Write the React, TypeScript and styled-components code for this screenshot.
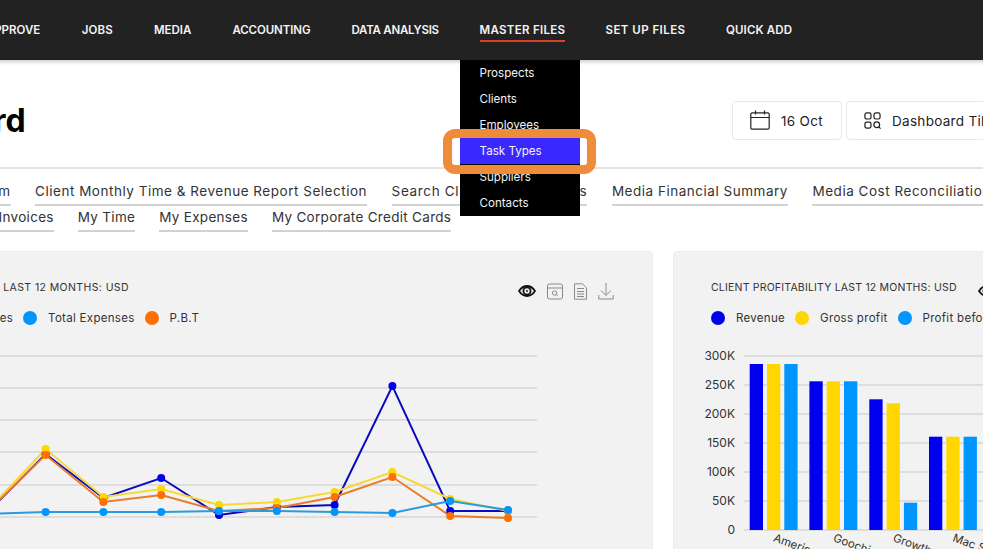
import React from "react";
import styled, { createGlobalStyle } from "styled-components";

const GlobalStyle = createGlobalStyle`
  html, body {
    margin: 0;
    background: #fff;
    font-family: "Inter", "Liberation Sans", sans-serif;
  }
`;

const Viewport = styled.div`
  position: relative;
  width: 983px;
  height: 549px;
  overflow: hidden;
`;

// the page is scrolled sideways in the reference, so the canvas starts left of the window
const Canvas = styled.div`
  position: relative;
  width: 1270px;
  margin-left: -157px;
`;

const NavBar = styled.nav`
  display: flex;
  align-items: center;
  gap: 40.8px;
  height: 60px;
  padding-left: 142px;
  background: #222222;
  box-shadow: 0 2px 4px rgba(0, 0, 0, 0.2);
`;

const NavItem = styled.a<{ $active?: boolean; $width: number; $spacing: number }>`
  display: flex;
  justify-content: center;
  width: ${(p) => p.$width}px;
  padding: 4px 0 3px;
  border-bottom: 2px solid ${(p) => (p.$active ? "#d8402a" : "transparent")};
  color: #f4f4f4;
  font-size: 11.5px;
  font-weight: 600;
  letter-spacing: ${(p) => p.$spacing}px;
  line-height: 14px;
  white-space: nowrap;
`;

const Header = styled.header`
  display: flex;
  align-items: center;
  justify-content: space-between;
  height: 94px;
  padding: 13px 102px 0 12px;
  border-bottom: 2px solid #e4e4e4;
`;

const Title = styled.h1`
  margin: 0;
  color: #000;
  font-size: 32px;
  font-weight: 700;
`;

const HeaderActions = styled.div`
  display: flex;
  gap: 4px;
`;

const HeaderButton = styled.button<{ $width: number }>`
  display: flex;
  align-items: center;
  gap: 11px;
  width: ${(p) => p.$width}px;
  height: 39px;
  padding: 0 0 0 17px;
  border: 1px solid #e8e8e8;
  border-radius: 4px;
  background: #fff;
  color: #222;
  font-family: inherit;
  font-size: 13.5px;
  letter-spacing: 0.3px;
  line-height: 20px;
  white-space: nowrap;
`;

const ButtonLabel = styled.span`
  padding-top: 2px;
`;

const Tabs = styled.div`
  padding-top: 12px;
`;

const TabRow = styled.div<{ $offset: number; $spacing: number; $gap: number }>`
  display: flex;
  gap: ${(p) => p.$gap}px;
  height: 26px;
  padding-left: ${(p) => p.$offset}px;
  letter-spacing: ${(p) => p.$spacing}px;
`;

const Tab = styled.a<{ $spacing?: number }>`
  align-self: flex-start;
  padding-bottom: 3px;
  border-bottom: 2px solid #d2d2d2;
  color: #333;
  font-size: 13.5px;
  letter-spacing: ${(p) => (p.$spacing ? `${p.$spacing}px` : "inherit")};
  line-height: 20px;
  white-space: nowrap;
`;

const Cards = styled.div`
  display: flex;
  gap: 20px;
  margin-top: 18px;
`;

const Card = styled.section<{ $width: number }>`
  box-sizing: border-box;
  flex: 0 0 ${(p) => p.$width}px;
  min-width: 0;
  height: 330px;
  padding: 29px 38px 0;
  border: 1px solid #ececec;
  border-radius: 4px;
  background: #f2f2f2;
`;

const CardHead = styled.div`
  display: flex;
  align-items: flex-start;
  justify-content: space-between;
  height: 24px;
`;

const CardTitle = styled.h2<{ $indent?: number; $spacing: number }>`
  margin: 0 0 0 ${(p) => p.$indent ?? 0}px;
  color: #333;
  font-size: 10.5px;
  font-weight: 400;
  letter-spacing: ${(p) => p.$spacing}px;
  line-height: 14px;
  white-space: nowrap;
`;

const CardIcons = styled.div`
  display: flex;
  flex: none;
  align-items: center;
  gap: 11px;
  height: 18px;
  margin-top: 1px;
`;

const Legend = styled.div<{ $indent: number }>`
  display: flex;
  align-items: center;
  height: 18px;
  margin: 4px 0 0 ${(p) => p.$indent}px;
  white-space: nowrap;
`;

const LegendDot = styled.span<{ $color: string }>`
  flex: none;
  width: 14px;
  height: 14px;
  margin-right: 11px;
  border-radius: 50%;
  background: ${(p) => p.$color};
`;

const LegendLabel = styled.span`
  margin-right: 10px;
  color: #333;
  font-size: 11.5px;
  letter-spacing: 0.3px;
`;

const ChartSvg = styled.svg`
  display: block;
  margin: 19px 0 0 -39px;
`;

const DropdownMenu = styled.ul`
  position: absolute;
  top: 60px;
  left: 617px;
  width: 120px;
  margin: 0;
  padding: 0;
  background: #000;
  list-style: none;
`;

const DropdownItem = styled.li<{ $active?: boolean }>`
  height: 26px;
  padding-left: 19.5px;
  background: ${(p) => (p.$active ? "#3a28ff" : "transparent")};
  color: #f2f2f2;
  font-size: 11.6px;
  line-height: 26px;
`;

const Callout = styled.div`
  position: absolute;
  top: 129px;
  left: 600px;
  box-sizing: border-box;
  width: 153px;
  height: 45px;
  border: 9px solid #ee8c3a;
  border-radius: 12px;
`;

const navItems = [
  { label: "APPROVE", width: 56, spacing: 0 },
  { label: "JOBS", width: 31, spacing: 0.1 },
  { label: "MEDIA", width: 38, spacing: 0 },
  { label: "ACCOUNTING", width: 78, spacing: -0.1 },
  { label: "DATA ANALYSIS", width: 88, spacing: -0.25 },
  { label: "MASTER FILES", width: 85, spacing: 0.3 },
  { label: "SET UP FILES", width: 79.5, spacing: 0.45 },
  { label: "QUICK ADD", width: 66, spacing: 0.15 },
];
const menuItems = ["Prospects", "Clients", "Employees", "Task Types", "Suppliers", "Contacts"];
const tabsTop = [
  { label: "Time Sheet Form" },
  { label: "Client Monthly Time & Revenue Report Selection" },
  { label: "Search Client Media Billings", spacing: 0.66 },
  { label: "Media Financial Summary" },
  { label: "Media Cost Reconciliation" },
];
const tabsBottom = ["Client Invoices", "My Time", "My Expenses", "My Corporate Credit Cards"];

const xs = [-12, 45.6, 103.4, 161.2, 219, 276.8, 334.6, 392.4, 450.2, 508];
const lineSeries = [
  { stroke: "#0a0ac0", dot: "#0000ee", ys: [512, 454, 498, 478, 515, 507, 505, 386, 511, 511] },
  { stroke: "#f5d93a", dot: "#ffd600", ys: [510, 449, 497, 489, 505, 502, 492, 472, 499, 511] },
  { stroke: "#e87d2a", dot: "#ff6f00", ys: [511, 455, 502, 495, 511, 508, 497, 477, 516, 518] },
  { stroke: "#2a9bdc", dot: "#0095ff", ys: [514, 512, 512, 512, 511, 511, 512, 513, 501, 510] },
];
const lineGrid = [356, 388, 420, 452, 485, 517];

const barTicks = [
  { y: 356, label: "300K" },
  { y: 385, label: "250K" },
  { y: 414, label: "200K" },
  { y: 443, label: "150K" },
  { y: 472, label: "100K" },
  { y: 501, label: "50K" },
  { y: 530, label: "0" },
];
const barColors = ["#0000ee", "#ffd600", "#0095ff"];
const barGroups = [
  { x: 749.7, name: "America", tops: [364, 364, 364] },
  { x: 809.4, name: "Goochi", tops: [381.3, 381.3, 381.3] },
  { x: 869.3, name: "Growth", tops: [399.3, 403.3, 502.7] },
  { x: 929, name: "Mac S", tops: [436.7, 436.7, 436.7] },
];

const EyeIcon = () => (
  <svg width="18" height="12" viewBox="0 0 18 12" fill="none" stroke="#111">
    <path d="M1 6c2-3 5-5 8-5s6 2 8 5c-2 3-5 5-8 5S3 9 1 6Z" strokeWidth="1.8" />
    <circle cx="9" cy="6" r="3.6" strokeWidth="1.8" />
    <circle cx="9" cy="6" r="1.2" fill="#555" stroke="none" />
  </svg>
);

const PreviewIcon = () => (
  <svg width="16" height="17" viewBox="0 0 16 17" fill="none" stroke="#8a8a8a" strokeWidth="1">
    <rect x="0.5" y="1" width="15" height="15" rx="2" />
    <path d="M0.5 5h15" />
    <circle cx="7.6" cy="10" r="2.2" />
    <path d="M9.3 11.7l1.4 1.4" />
  </svg>
);

const DocIcon = () => (
  <svg width="13" height="17" viewBox="0 0 13 17" fill="none" stroke="#8a8a8a" strokeWidth="1">
    <path d="M0.5 0.8h8l4 4v11.4h-12z" />
    <path d="M3 5.5h7M3 8.5h7M3 11h7M3 13.5h7" />
  </svg>
);

const DownloadIcon = () => (
  <svg width="16" height="18" viewBox="0 0 16 18" fill="none" stroke="#8a8a8a" strokeWidth="1">
    <path d="M8 1v12M3 8.5l5 5 5-5" />
    <path d="M0.8 13v4h14.4v-4" />
  </svg>
);

const CalendarIcon = () => (
  <svg width="20" height="20" viewBox="0 0 20 20" fill="none" stroke="#222" strokeWidth="1.2">
    <rect x="0.8" y="2.8" width="18.4" height="16.4" rx="1.5" />
    <path d="M0.8 7.5h18.4M5.5 0.5v4M14.5 0.5v4" />
  </svg>
);

const TilesIcon = () => (
  <svg width="17" height="17" viewBox="0 0 18 18" fill="none" stroke="#222" strokeWidth="1.3">
    <rect x="1" y="1" width="6.4" height="6.4" rx="1.8" />
    <rect x="10.6" y="1" width="6.4" height="6.4" rx="1.8" />
    <rect x="1" y="10.6" width="6.4" height="6.4" rx="1.8" />
    <circle cx="13.5" cy="13.5" r="3" />
    <path d="M15.6 15.6l2 2" />
  </svg>
);

const CardToolbar = () => (
  <CardIcons>
    <EyeIcon />
    <PreviewIcon />
    <DocIcon />
    <DownloadIcon />
  </CardIcons>
);

const App: React.FC = () => {
  return (
    <Viewport>
      <GlobalStyle />
      <Canvas>
        <NavBar>
          {navItems.map((item) => (
            <NavItem
              key={item.label}
              $active={item.label === "MASTER FILES"}
              $width={item.width}
              $spacing={item.spacing}
            >
              {item.label}
            </NavItem>
          ))}
        </NavBar>

        <Header>
          <Title>Dashboard</Title>
          <HeaderActions>
            <HeaderButton $width={110}>
              <CalendarIcon />
              <ButtonLabel>16 Oct</ButtonLabel>
            </HeaderButton>
            <HeaderButton $width={165}>
              <TilesIcon />
              <ButtonLabel>Dashboard Tiles</ButtonLabel>
            </HeaderButton>
          </HeaderActions>
        </Header>

        <Tabs>
          <TabRow $offset={51} $spacing={0.52} $gap={24.5}>
            {tabsTop.map((tab) => (
              <Tab key={tab.label} $spacing={tab.spacing}>
                {tab.label}
              </Tab>
            ))}
          </TabRow>
          <TabRow $offset={113} $spacing={0.3} $gap={24}>
            {tabsBottom.map((tab) => (
              <Tab key={tab}>{tab}</Tab>
            ))}
          </TabRow>
        </Tabs>

        <Cards>
          <Card $width={810}>
            <CardHead>
              <CardTitle $indent={-13} $spacing={0.4}>
                AGENCY PROFITABILITY LAST 12 MONTHS: USD
              </CardTitle>
              <CardToolbar />
            </CardHead>
            <Legend $indent={-5}>
              <LegendDot $color="#0000ee" />
              <LegendLabel>Revenue</LegendLabel>
              <LegendDot $color="#ffd600" />
              <LegendLabel>Fees</LegendLabel>
              <LegendDot $color="#0095ff" />
              <LegendLabel>Total Expenses</LegendLabel>
              <LegendDot $color="#ff6f00" />
              <LegendLabel>P.B.T</LegendLabel>
            </Legend>
            <ChartSvg width="810" height="203" viewBox="-157 346 810 203">
              {lineGrid.map((y) => (
                <line key={y} x1="-157" x2="537" y1={y} y2={y} stroke="#c9c9c9" />
              ))}
              {lineSeries.map((s) => (
                <polyline
                  key={s.stroke}
                  points={xs.map((x, i) => `${x},${s.ys[i]}`).join(" ")}
                  fill="none"
                  stroke={s.stroke}
                  strokeWidth="2"
                />
              ))}
              {lineSeries.map((s) =>
                xs.map((x, i) => <circle key={s.dot + i} cx={x} cy={s.ys[i]} r="4" fill={s.dot} />)
              )}
            </ChartSvg>
          </Card>

          <Card $width={440}>
            <CardHead>
              <CardTitle $indent={-1} $spacing={0.2}>
                CLIENT PROFITABILITY LAST 12 MONTHS: USD
              </CardTitle>
              <CardToolbar />
            </CardHead>
            <Legend $indent={-1}>
              <LegendDot $color="#0000ee" />
              <LegendLabel>Revenue</LegendLabel>
              <LegendDot $color="#ffd600" />
              <LegendLabel>Gross profit</LegendLabel>
              <LegendDot $color="#0095ff" />
              <LegendLabel>Profit before tax</LegendLabel>
            </Legend>
            <ChartSvg width="440" height="203" viewBox="673 346 440 203">
              {barTicks.map((t) => (
                <g key={t.y}>
                  <line x1="744" x2="1113" y1={t.y} y2={t.y} stroke="#c9c9c9" />
                  <text x="735" y={t.y + 4} textAnchor="end" fontSize="12" fill="#333" fontFamily="Inter, sans-serif">
                    {t.label}
                  </text>
                </g>
              ))}
              {barGroups.map((g) => (
                <g key={g.name}>
                  {g.tops.map((top, i) => (
                    <rect key={i} x={g.x + i * 17.3} y={top} width="13.3" height={530 - top} fill={barColors[i]} />
                  ))}
                  <text
                    x={g.x + 23}
                    y="541"
                    fontSize="11.5"
                    fill="#333"
                    fontFamily="Inter, sans-serif"
                    transform={`rotate(20 ${g.x + 23} 541)`}
                  >
                    {g.name}
                  </text>
                </g>
              ))}
            </ChartSvg>
          </Card>
        </Cards>

        <DropdownMenu>
          {menuItems.map((item) => (
            <DropdownItem key={item} $active={item === "Task Types"}>
              {item}
            </DropdownItem>
          ))}
        </DropdownMenu>
        <Callout />
      </Canvas>
    </Viewport>
  );
};

export default App;
